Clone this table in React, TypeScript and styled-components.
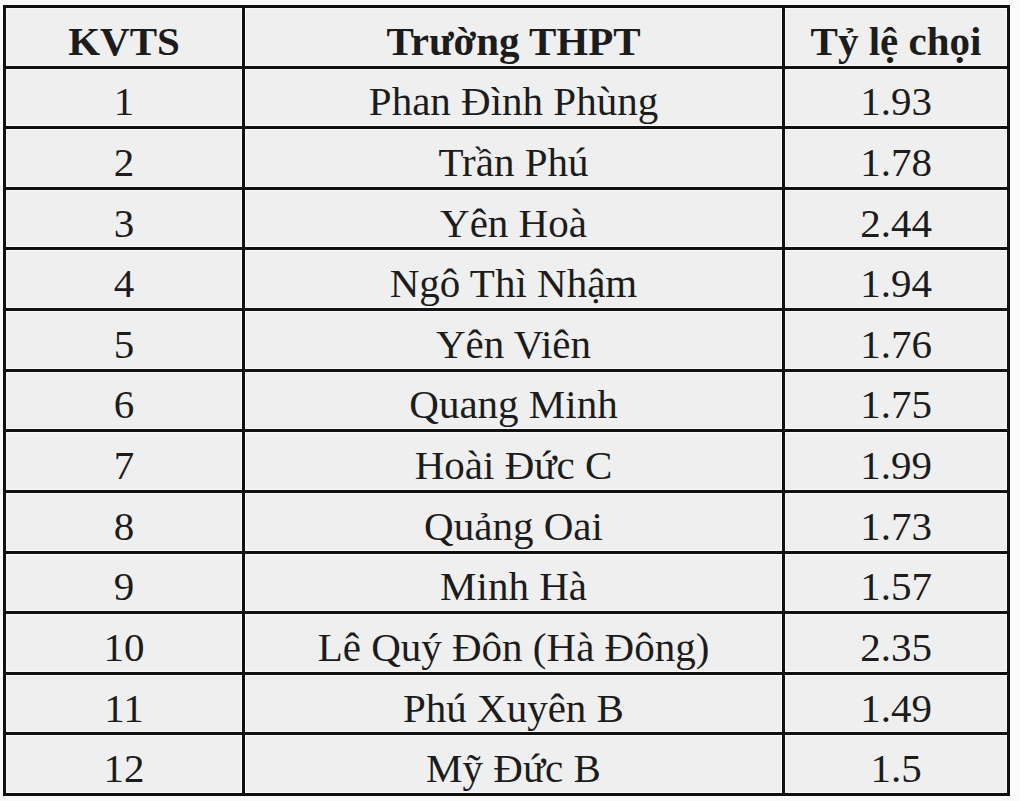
import React from "react";
import styled, { createGlobalStyle } from "styled-components";

const rows: [number, string, string][] = [
  [1, "Phan Đình Phùng", "1.93"],
  [2, "Trần Phú", "1.78"],
  [3, "Yên Hoà", "2.44"],
  [4, "Ngô Thì Nhậm", "1.94"],
  [5, "Yên Viên", "1.76"],
  [6, "Quang Minh", "1.75"],
  [7, "Hoài Đức C", "1.99"],
  [8, "Quảng Oai", "1.73"],
  [9, "Minh Hà", "1.57"],
  [10, "Lê Quý Đôn (Hà Đông)", "2.35"],
  [11, "Phú Xuyên B", "1.49"],
  [12, "Mỹ Đức B", "1.5"],
];

function App() {
  return (
    <>
      <GlobalStyle />
      <Sheet>
        <Table>
          <Cell $head>KVTS</Cell>
          <Cell $head>Trường THPT</Cell>
          <Cell $head>Tỷ lệ chọi</Cell>
          {rows.map(([no, school, ratio]) => (
            <React.Fragment key={no}>
              <Cell>{no}</Cell>
              <Cell>{school}</Cell>
              <Cell>{ratio}</Cell>
            </React.Fragment>
          ))}
        </Table>
      </Sheet>
    </>
  );
}

const GlobalStyle = createGlobalStyle`
  html, body {
    margin: 0;
    padding: 0;
    background: #fbfbfb;
  }
`;

const Sheet = styled.div`
  padding: 5px 0 0 3px;
  width: 1020px;
  height: 801px;
  box-sizing: border-box;
  overflow: hidden;
`;

const Table = styled.div`
  display: grid;
  grid-template-columns: 236px 537px 222px;
  grid-template-rows: repeat(13, 1fr);
  gap: 3px;
  padding: 3px;
  width: 1007px;
  height: 791px;
  box-sizing: border-box;
  background: #111;
`;

const Cell = styled.div<{ $head?: boolean }>`
  display: flex;
  align-items: center;
  justify-content: center;
  padding-top: 8px;
  box-sizing: border-box;
  background: #efefef;
  box-shadow: inset 1px 1px 0 #fafafa, inset -1px -1px 0 #fafafa;
  font-family: "Liberation Serif", "Times New Roman", serif;
  font-size: 41px;
  font-weight: ${(p) => (p.$head ? 700 : 400)};
  color: #1c1c1c;
  white-space: nowrap;
`;

export default App;
